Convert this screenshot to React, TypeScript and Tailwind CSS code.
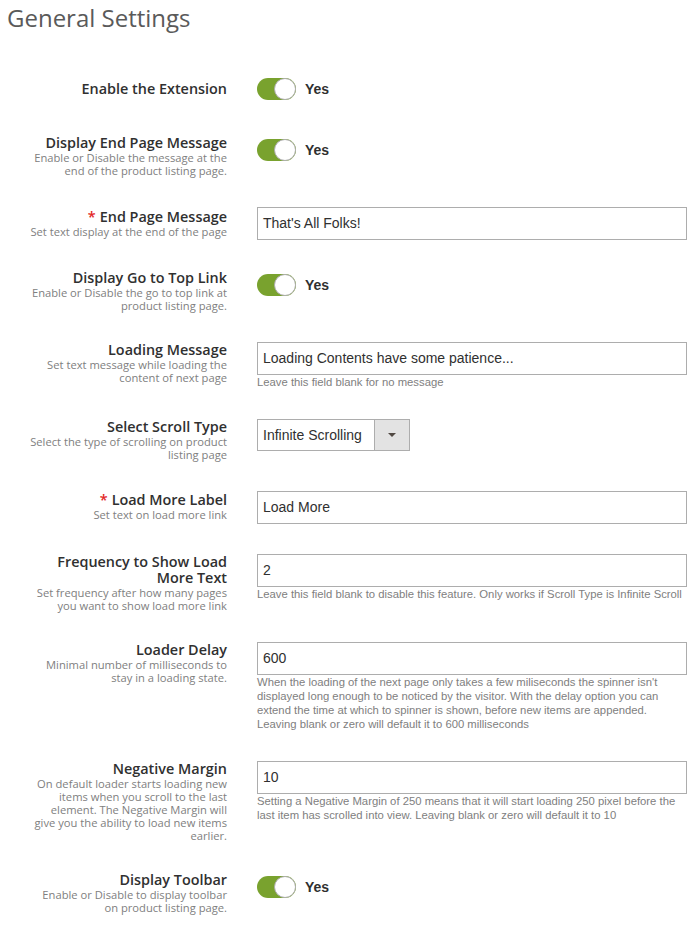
import type { ReactNode } from 'react';

const sans = "font-[family-name:'Open_Sans',sans-serif]";
const arial = "font-[family-name:'Liberation_Sans',Arial,sans-serif]";

interface RowProps {
  label: string;
  required?: boolean;
  desc?: string;
  labelPt?: string;
  ctrlPt?: string;
  extra?: string;
  children: ReactNode;
}

function Row({ label, required, desc, labelPt = '', ctrlPt = '', extra = '', children }: RowProps) {
  return (
    <div className={`flex items-start ${extra}`}>
      <div className={`w-[227px] shrink-0 flex justify-end ${labelPt}`}>
        <div className="w-[198px] text-right">
          <div className={`${sans} text-[14.4px] leading-[16px] font-semibold text-[#303030]`}>
            {required && <span className="text-[#e22626] mr-[4px]">*</span>}
            {label}
          </div>
          {desc && (
            <div className={`${sans} text-[11.2px] leading-[13px] text-[#808080]`}>{desc}</div>
          )}
        </div>
      </div>
      <div className={`ml-[30px] w-[430px] ${ctrlPt}`}>{children}</div>
    </div>
  );
}

function Toggle() {
  return (
    <div className="flex items-center gap-[9px]">
      <div className="relative w-[39px] h-[22px] rounded-full bg-[#79a22e]">
        <div className="absolute right-0 top-0 w-[22px] h-[22px] rounded-full bg-white border border-[#adadad]" />
      </div>
      <span className={`${arial} text-[14px] font-bold text-[#303030]`}>Yes</span>
    </div>
  );
}

function TextInput({ value }: { value: string }) {
  return (
    <div className={`h-[33px] border border-[#adadad] bg-white flex items-center px-[5px] ${arial} text-[14px] text-[#303030]`}>
      {value}
    </div>
  );
}

function Note({ children }: { children: ReactNode }) {
  return <div className={`w-[428px] ${arial} text-[11.3px] leading-[14px] text-[#808080]`}>{children}</div>;
}

export default function App() {
  return (
    <div className="w-[692px] min-h-[930px] bg-white">
      <h1 className={`${sans} text-[24px] leading-[32px] pt-[2px] pl-[7px] text-[#5a5a5a] font-normal`}>
        General Settings
      </h1>

      <div className="mt-[44px] flex flex-col gap-[30px]">
        <Row label="Enable the Extension" labelPt="pt-[3px]" extra="mb-[5px]">
          <Toggle />
        </Row>

        <Row
          label="Display End Page Message"
          desc="Enable or Disable the message at the end of the product listing page."
          ctrlPt="pt-[4px]"
        >
          <Toggle />
        </Row>

        <Row label="End Page Message" required desc="Set text display at the end of the page" labelPt="pt-[2px]">
          <TextInput value="That's All Folks!" />
        </Row>

        <Row
          label="Display Go to Top Link"
          desc="Enable or Disable the go to top link at product listing page."
          ctrlPt="pt-[4px]"
        >
          <Toggle />
        </Row>

        <Row label="Loading Message" desc="Set text message while loading the content of next page">
          <TextInput value="Loading Contents have some patience..." />
          <Note>Leave this field blank for no message</Note>
        </Row>

        <Row label="Select Scroll Type" desc="Select the type of scrolling on product listing page">
          <div className={`w-[153px] h-[32px] border border-[#adadad] flex ${arial} text-[14px] text-[#303030]`}>
            <div className="flex-1 flex items-center px-[5px] bg-white">Infinite Scrolling</div>
            <div className="w-[35px] border-l border-[#adadad] bg-[#e3e3e3] flex items-center justify-center">
              <svg width="8" height="4" viewBox="0 0 8 4">
                <path d="M0 0h8L4 4z" fill="#514943" />
              </svg>
            </div>
          </div>
        </Row>

        <Row label="Load More Label" required desc="Set text on load more link" labelPt="pt-[1px]">
          <TextInput value="Load More" />
        </Row>

        <Row
          label="Frequency to Show Load More Text"
          desc="Set frequency after how many pages you want to show load more link"
        >
          <TextInput value="2" />
          <Note>Leave this field blank to disable this feature. Only works if Scroll Type is Infinite Scroll</Note>
        </Row>

        <Row label="Loader Delay" desc="Minimal number of milliseconds to stay in a loading state.">
          <TextInput value="600" />
          <Note>
            When the loading of the next page only takes a few miliseconds the spinner isn't displayed long enough
            to be noticed by the visitor. With the delay option you can extend the time at which to spinner is
            shown, before new items are appended. Leaving blank or zero will default it to 600 milliseconds
          </Note>
        </Row>

        <Row
          label="Negative Margin"
          desc="On default loader starts loading new items when you scroll to the last element. The Negative Margin will give you the ability to load new items earlier."
        >
          <TextInput value="10" />
          <Note>
            Setting a Negative Margin of 250 means that it will start loading 250 pixel before the last item has
            scrolled into view. Leaving blank or zero will default it to 10
          </Note>
        </Row>

        <Row
          label="Display Toolbar"
          desc="Enable or Disable to display toolbar on product listing page."
          ctrlPt="pt-[4px]"
        >
          <Toggle />
        </Row>
      </div>
    </div>
  );
}
